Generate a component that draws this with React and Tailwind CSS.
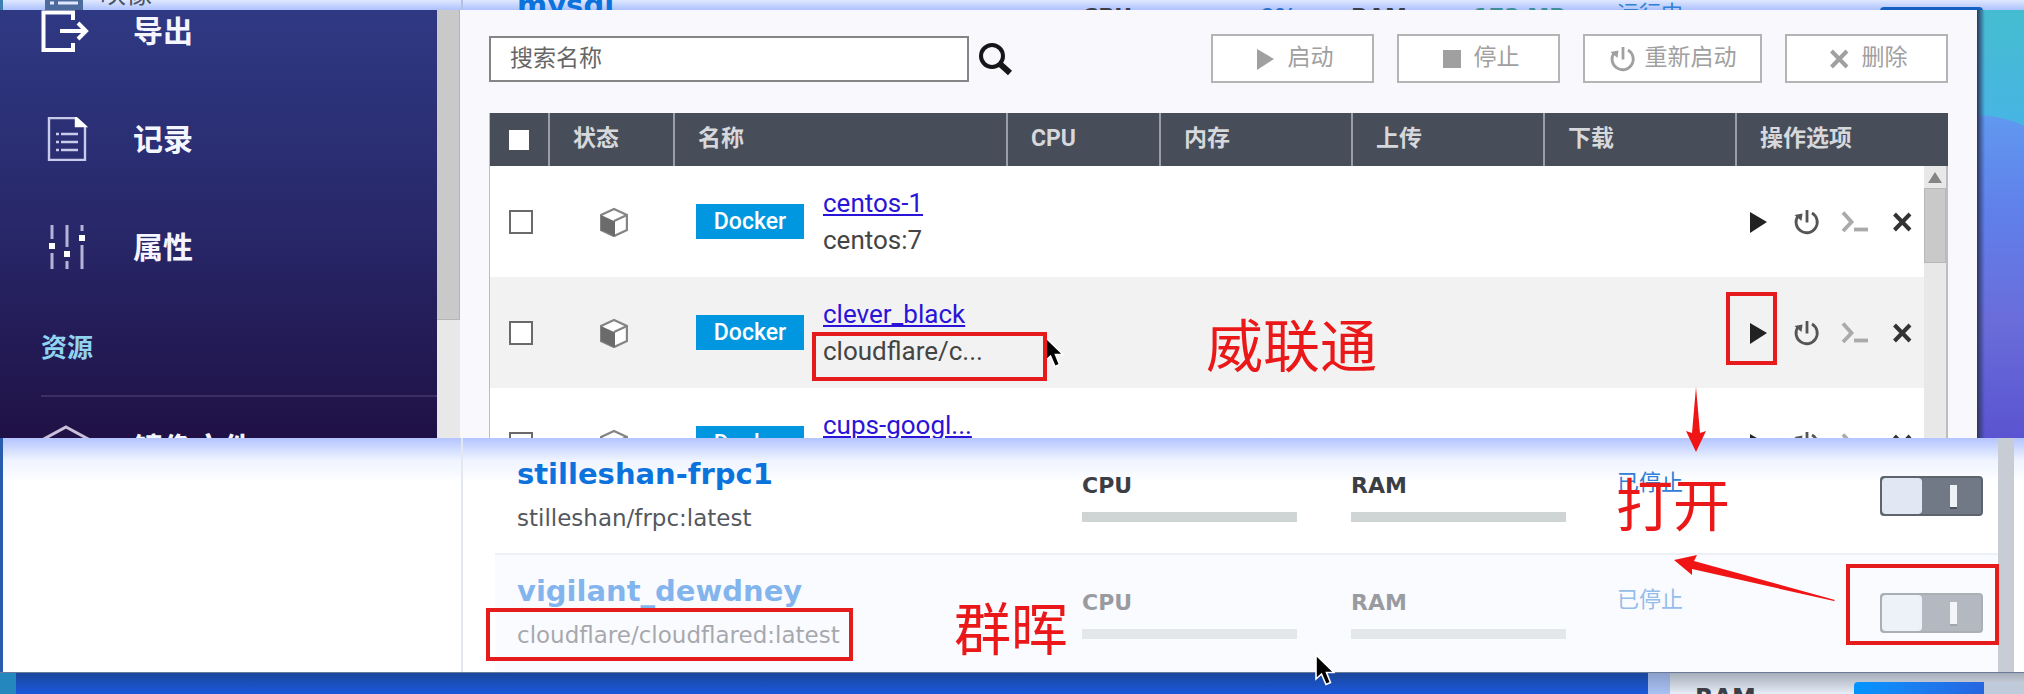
import React from 'react';

const columns = ['CPU', '内存', '上传', '下载'];

const containers = [
  { name: 'centos-1', image: 'centos:7' },
  { name: 'clever_black', image: 'cloudflare/c...' },
  { name: 'cups-googl...', image: 'google-cups' },
];

const PlayIcon = () => (
  <svg viewBox="0 0 28 28" className="w-7 h-7 shrink-0" fill="currentColor">
    <path d="M5 4 L22 14 L5 25 Z" />
  </svg>
);

const StopIcon = () => (
  <svg viewBox="0 0 28 28" className="w-7 h-7 shrink-0" fill="currentColor">
    <rect x="5" y="5" width="18" height="18" />
  </svg>
);

const RestartIcon = () => (
  <svg viewBox="0 0 28 28" className="w-7 h-7 shrink-0" fill="none" stroke="currentColor" strokeWidth="2.8">
    <path d="M19 5 A10.6 10.6 0 1 1 5 8" />
    <path d="M14 2 V14.5" />
    <path d="M1.5 7 L9.5 5.5 L8.5 13 Z" fill="currentColor" stroke="none" />
  </svg>
);

const TerminalIcon = () => (
  <svg viewBox="0 0 28 28" className="w-7 h-7 shrink-0 text-[#aaaaaa]" fill="none" stroke="currentColor">
    <path d="M2 4.5 L10.5 14 L2 23" strokeWidth="3.8" />
    <path d="M13 21.5 H27" strokeWidth="3.8" />
  </svg>
);

const CloseIcon = () => (
  <svg viewBox="0 0 28 28" className="w-7 h-7 shrink-0" fill="none" stroke="currentColor" strokeWidth="4">
    <path d="M5.5 6 L21 22 M21 6 L5.5 22" />
  </svg>
);

const CubeIcon = () => (
  <svg viewBox="0 0 28 30" className="block w-7 h-[30px]">
    <path d="M14 2 L27 8 V23 L14 29 L1 23 V8 Z" fill="#fff" stroke="#858585" strokeWidth="2.4" strokeLinejoin="round" />
    <path d="M1 8 L14 14 V29 L1 23 Z" fill="#6b6b6b" />
    <path d="M14 14 L27 8" stroke="#858585" strokeWidth="2.4" />
    <path d="M14 14 V29" stroke="#6b6b6b" strokeWidth="2" />
  </svg>
);

const Cursor = ({ className }) => (
  <svg viewBox="0 0 20 32" className={`absolute w-5 h-8 ${className}`}>
    <path d="M1 1 V25 L6.5 20 L11 30.5 L15.5 28.5 L11.5 18.5 H19 Z" fill="#000" stroke="#fff" strokeWidth="1.6" />
  </svg>
);

const ActionButton = ({ icon, label, width }) => (
  <button
    type="button"
    disabled
    className={`${width} flex h-[49px] items-center justify-center gap-2 border-2 border-[#b4b4b4] bg-white text-[23px] text-[#a0a0a0]`}
  >
    {icon}
    {label}
  </button>
);

const SideItem = ({ icon, label }) => (
  <a href="#" className="flex h-[42px] items-center gap-[43px] text-[30px] font-bold text-[#f4f5ff]">
    {icon}
    {label}
  </a>
);

const Sidebar = () => (
  <nav className="flex min-w-0 flex-1 flex-col bg-linear-to-b from-[#2f3983] via-[#28286a] to-[#1f1146] pl-[41px]">
    <div className="flex flex-col gap-[66px]">
      <SideItem
        label="导出"
        icon={
          <svg viewBox="0 0 49 44" className="w-[49px] h-11" fill="none" stroke="#fff" strokeWidth="4">
            <path d="M32 11 V3.5 H2.5 V41 H32 V34" />
            <path d="M19 22 H44" />
            <path d="M37 14 L45 22 L37 30" />
          </svg>
        }
      />
      <SideItem
        label="记录"
        icon={
          <svg viewBox="0 0 49 44" className="w-[49px] h-11" fill="none" stroke="#c9cbea" strokeWidth="2.4">
            <path d="M35 1 H8 V43 H44 V9 Z" />
            <path d="M35 1 L44 9 H35 Z" fill="#fff" stroke="#fff" />
            <path d="M15 17 H18 M20 17 H37 M15 25 H18 M20 25 H37 M15 33 H18 M20 33 H37" />
          </svg>
        }
      />
      <SideItem
        label="属性"
        icon={
          <svg viewBox="0 0 49 44" className="w-[49px] h-11" fill="none" stroke="#b5b4d6" strokeWidth="3">
            <path d="M11 0 V14 M11 28 V44 M26 0 V22 M26 36 V44 M41 0 V6 M41 20 V44" />
            <path d="M8 18 h6 v6 h-6z M23 26 h6 v6 h-6z M38 10 h6 v6 h-6z" fill="#fff" stroke="none" />
          </svg>
        }
      />
    </div>
    <h2 className="mt-[60px] text-[26px] leading-10 font-bold text-[#8fd3f0]">资源</h2>
    <hr className="mt-[27px] border-t-2 border-[#3c2f66]" />
    <div className="mt-[30px]">
      <SideItem
        label="镜像文件"
        icon={
          <svg viewBox="0 0 49 52" className="mt-1.5 w-[49px] h-[52px]" fill="none" stroke="#c9c1da" strokeWidth="3">
            <path d="M25 2 L49 15 V38 L25 50 L1 38 V15 Z" />
          </svg>
        }
      />
    </div>
  </nav>
);

const ContainerTable = () => (
  <div className="relative border-l border-[#b9bcc4]">
    <table className="w-full table-fixed border-collapse text-left">
      <colgroup>
        <col className="w-[59px]" />
        <col className="w-[125px]" />
        <col />
        <col className="w-[153px]" />
        <col className="w-[192px]" />
        <col className="w-[192px]" />
        <col className="w-[192px]" />
        <col className="w-[212px]" />
      </colgroup>
      <thead>
        <tr className="h-[53px] bg-[#474d59] text-[23px] font-bold text-[#d6d8dc]">
          <th className="border-r-2 border-[#9a9ea6] pl-[19px]">
            <input type="checkbox" aria-label="全选" className="block h-5 w-5 appearance-none bg-white" />
          </th>
          <th className="border-r-2 border-[#9a9ea6] pl-[23px]">状态</th>
          <th className="border-r-2 border-[#9a9ea6] pl-[23px]">名称</th>
          {columns.map((c) => (
            <th key={c} className="border-r-2 border-[#9a9ea6] pl-[23px]">{c}</th>
          ))}
          <th className="pl-[23px]">操作选项</th>
        </tr>
      </thead>
      <tbody>
        {containers.map((c) => (
          <tr key={c.name} className="h-[111px] bg-white even:bg-[#f2f2f2]">
            <td className="pl-[19px]">
              <input
                type="checkbox"
                aria-label={c.name}
                className="block h-6 w-6 appearance-none border-2 border-[#6a6a6a] bg-white"
              />
            </td>
            <td className="pl-[51px]"><CubeIcon /></td>
            <td className="pl-[22px]">
              <div className="flex items-center gap-[19px]">
                <span className="flex h-[35px] w-[108px] items-center justify-center bg-[#0097e0] pt-0.5 text-[23px] font-medium text-white">
                  Docker
                </span>
                <div className="flex flex-col text-[26px] leading-[37px] text-[#444]">
                  <a href="#" className="text-[#2a14d8] underline decoration-2 underline-offset-2">{c.name}</a>
                  <span>{c.image}</span>
                </div>
              </div>
            </td>
            <td />
            <td />
            <td />
            <td />
            <td className="pl-[9px]">
              <div className="flex gap-5 text-[#222]">
                <button type="button" aria-label="启动"><PlayIcon /></button>
                <button type="button" aria-label="重新启动" className="text-[#555]"><RestartIcon /></button>
                <button type="button" aria-label="终端" disabled><TerminalIcon /></button>
                <button type="button" aria-label="删除" className="text-[#333]"><CloseIcon /></button>
              </div>
            </td>
          </tr>
        ))}
      </tbody>
    </table>
    {/* list scrollbar */}
    <div className="absolute top-[53px] right-0 bottom-0 flex w-6 flex-col items-center border-r-2 border-[#bdbdbd] bg-[#e8e8e8]">
      <svg viewBox="0 0 22 22" className="w-[22px] h-[22px]" fill="#858585">
        <path d="M11 6 L18 17 H4 Z" />
      </svg>
      <div className="h-[75px] w-full border border-[#b8b8b8] bg-[#c9c9c9]" />
    </div>
  </div>
);

const ContainerStation = () => (
  <section className="flex h-[428px] overflow-hidden bg-[#f8f8fd] font-[Roboto,'Noto_Sans_CJK_SC',sans-serif]">
    <div className="flex w-[460px] shrink-0">
      <Sidebar />
      <div className="w-[23px] bg-[#e8e8e8]">
        <div className="h-[310px] border-r border-b border-[#b5b5b5] bg-[#c9c9c9]" />
      </div>
    </div>
    <main className="min-w-0 flex-1 pt-6 pr-[29px] pl-[29px]">
      <div className="flex items-center justify-between">
        <div className="flex items-center gap-2">
          <input
            type="text"
            placeholder="搜索名称"
            aria-label="搜索名称"
            className="h-[46px] w-[480px] border-2 border-[#858585] bg-white pl-[19px] text-[23px] text-[#666] placeholder:text-[#666]"
          />
          <button type="button" aria-label="搜索">
            <svg viewBox="0 0 36 34" className="block w-9 h-[34px]" fill="none" stroke="#161616">
              <circle cx="15" cy="14" r="11" strokeWidth="4" />
              <path d="M22.5 21.5 L33 31" strokeWidth="6" />
            </svg>
          </button>
        </div>
        <div className="flex gap-[23px]">
          <ActionButton icon={<PlayIcon />} label="启动" width="w-[163px]" />
          <ActionButton icon={<StopIcon />} label="停止" width="w-[163px]" />
          <ActionButton icon={<RestartIcon />} label="重新启动" width="w-[179px]" />
          <ActionButton icon={<CloseIcon />} label="删除" width="w-[163px]" />
        </div>
      </div>
      <div className="mt-[30px]">
        <ContainerTable />
      </div>
    </main>
    {/* wallpaper behind the window */}
    <svg viewBox="0 0 47 428" preserveAspectRatio="none" className="h-full w-[47px] shrink-0">
      <defs>
        <linearGradient id="sky" x1="0" y1="0" x2="0" y2="1">
          <stop offset="0" stopColor="#45bdd0" />
          <stop offset="0.3" stopColor="#48b4e6" />
        </linearGradient>
        <linearGradient id="hill" x1="0" y1="0" x2="0" y2="1">
          <stop offset="0" stopColor="#6099f0" />
          <stop offset="0.3" stopColor="#6080ea" />
          <stop offset="0.65" stopColor="#6a6cda" />
          <stop offset="1" stopColor="#5a54d0" />
        </linearGradient>
        <linearGradient id="edge">
          <stop offset="0" stopColor="#2b3560" />
          <stop offset="1" stopColor="#2b3560" stopOpacity="0" />
        </linearGradient>
      </defs>
      <rect width="47" height="428" fill="url(#sky)" />
      <path d="M0 105 Q27 106 47 116 V428 H0 Z" fill="url(#hill)" />
      <rect width="8" height="428" fill="url(#edge)" />
    </svg>
  </section>
);

const Meter = ({ label, value, valueColor }) => (
  <div className="w-[215px]">
    <div className="flex justify-between text-[22px] leading-8 font-bold text-[#3b3e45]">
      <span>{label}</span>
      {value && <span className={valueColor}>{value}</span>}
    </div>
    <div className="mt-[10px] h-[10px] bg-[#cfd4d5]" />
  </div>
);

const ServiceRow = ({ name, image, status, cpu, ram, on, dim }) => (
  <li className={`${dim ? 'bg-[#fafbff]' : ''} h-[117px] pt-[18px] pr-[15px] pl-[22px]`}>
    <div className={`flex items-start ${dim ? 'opacity-50' : ''}`}>
      <div className="min-w-0 flex-1">
        <h3 className="text-[29px] leading-9 font-bold text-[#0c72dc]">{name}</h3>
        <p className="mt-2 text-[23px] leading-9 text-[#55585e]">{image}</p>
      </div>
      <div className="mt-[14px] flex gap-[54px]">
        <Meter label="CPU" value={cpu} valueColor="text-[#2b70c8]" />
        <Meter label="RAM" value={ram} valueColor="text-[#3f8f94]" />
      </div>
      <span className="mt-2 ml-[51px] w-[263px] font-['Noto_Sans_CJK_SC',sans-serif] text-[22px] leading-8 text-[#2f80d6]">
        {status}
      </span>
      <button
        type="button"
        role="switch"
        aria-checked={!!on}
        aria-label={name}
        className={`mt-[20px] flex h-10 w-[103px] overflow-hidden rounded-sm border-2 ${on ? 'border-[#1560c0] bg-[#1560c0]' : 'border-[#5d646e] bg-[#707985]'}`}
      >
        <span className={`h-full w-10 rounded-sm ${on ? 'bg-[#1560c0]' : 'bg-[#e2e8f3]'}`} />
        <span className="mt-[7px] ml-7 h-6 w-[7px] border-b-2 border-[#4a515c] bg-[#eef1f5]" />
      </button>
    </div>
  </li>
);

const TopStrip = () => (
  <section className="flex h-2.5 overflow-hidden border-l-3 border-[#3b7fb0] bg-linear-to-b from-[#dfe8ff] to-[#aec2fd] font-['DejaVu_Sans',sans-serif]">
    <div className="flex w-[460px] shrink-0 items-end gap-[17px] border-r-2 border-[#b4c1e2] pl-[42px]">
      <svg viewBox="0 0 38 10" className="w-[38px] h-2.5">
        <path d="M0 0 H38 V10 H0 Z" fill="#4d6a9c" />
        <path d="M5 3 H9 M13 3 H33" stroke="#dfe8ff" strokeWidth="3" />
      </svg>
      <span className="pb-1 font-['Noto_Sans_CJK_SC',sans-serif] text-[26px] leading-7 text-[#4b5364]">映像</span>
    </div>
    <ul className="-mt-[31px] min-w-0 flex-1 pr-[26px] pl-8">
      <ServiceRow name="mysql" image="mysql:latest" status="运行中" cpu="0%" ram="173 MB" on />
    </ul>
  </section>
);

const SynologyList = () => (
  <section className="flex border-l-3 border-[#2a5cae] bg-white font-['DejaVu_Sans',sans-serif]">
    <div className="w-[460px] shrink-0 border-r-2 border-[#e3e7f0] bg-linear-to-b from-[#b4c4ff] via-[#eef3ff] via-[22px] to-white to-[44px]" />
    <div className="flex min-w-0 flex-1 bg-linear-to-b from-[#b4c4ff] via-[#eef3ff] via-[22px] to-white to-[44px]">
      <ul className="min-w-0 flex-1 divide-y-2 divide-[#edf0f6] pl-8">
        <ServiceRow name="stilleshan-frpc1" image="stilleshan/frpc:latest" status="已停止" />
        <ServiceRow name="vigilant_dewdney" image="cloudflare/cloudflared:latest" status="已停止" dim />
      </ul>
      <div className="mr-[10px] w-4 bg-[#c8ccd4]" />
    </div>
  </section>
);

const Desktop = () => (
  <footer className="flex h-[22px] overflow-hidden border-t border-[#6a7a9a] font-['DejaVu_Sans',sans-serif]">
    <div className="w-4 bg-[#2487bd]" />
    <div className="flex-1 bg-linear-to-b from-[#1a479c] to-[#1b58dc]" />
    <div className="w-[22px] bg-linear-to-b from-[#8b9fca] to-[#a9c2f4]" />
    <div className="flex w-[354px] bg-linear-to-b from-[#a5adba] to-[#e8eef7] pl-[25px]">
      <span className="mt-[11px] flex-1 text-[24px] leading-7 font-bold text-[#3b3e45]">RAM</span>
      <div className="mt-[9px] w-[130px] rounded-tl bg-linear-to-r from-[#0095ff] to-[#2565e0]" />
      <div className="mt-[9px] w-10 bg-[#bfcbda]" />
    </div>
  </footer>
);

// hand-drawn marks laid over both windows
const Annotations = () => (
  <div className="pointer-events-none absolute inset-0 font-['Noto_Sans_CJK_SC',sans-serif] text-[57px] leading-none text-[#ea1818]">
    <Cursor className="top-[336px] left-[1044px]" />
    <Cursor className="top-[654px] left-[1315px]" />
    <div className="absolute top-[332px] left-[812px] h-[49px] w-[235px] border-4 border-[#e61c1c]" />
    <div className="absolute top-[292px] left-[1726px] h-[73px] w-[51px] border-4 border-[#e61c1c]" />
    <div className="absolute top-[608px] left-[486px] h-[53px] w-[367px] border-4 border-[#e61c1c]" />
    <div className="absolute top-[564px] left-[1846px] h-[81px] w-[153px] border-4 border-[#e61c1c]" />
    <span className="absolute top-[314px] left-[1206px]">威联通</span>
    <span className="absolute top-[597px] left-[954px]">群晖</span>
    <span className="absolute top-[473px] left-[1616px]">打开</span>
    <svg viewBox="0 0 170 220" className="absolute top-[385px] left-[1670px] h-[220px] w-[170px]" fill="#f01414">
      <path d="M26 2 L30 48 L36 46 L26 67 L16 46 L22 48 Z" />
      <path d="M4 175 L27 170 L24 176 L165 215 L164 216 L22 184 L22 190 Z" />
    </svg>
  </div>
);

const App = () => (
  <div className="relative overflow-hidden">
    <TopStrip />
    <ContainerStation />
    <SynologyList />
    <Desktop />
    <Annotations />
  </div>
);

export default App;
